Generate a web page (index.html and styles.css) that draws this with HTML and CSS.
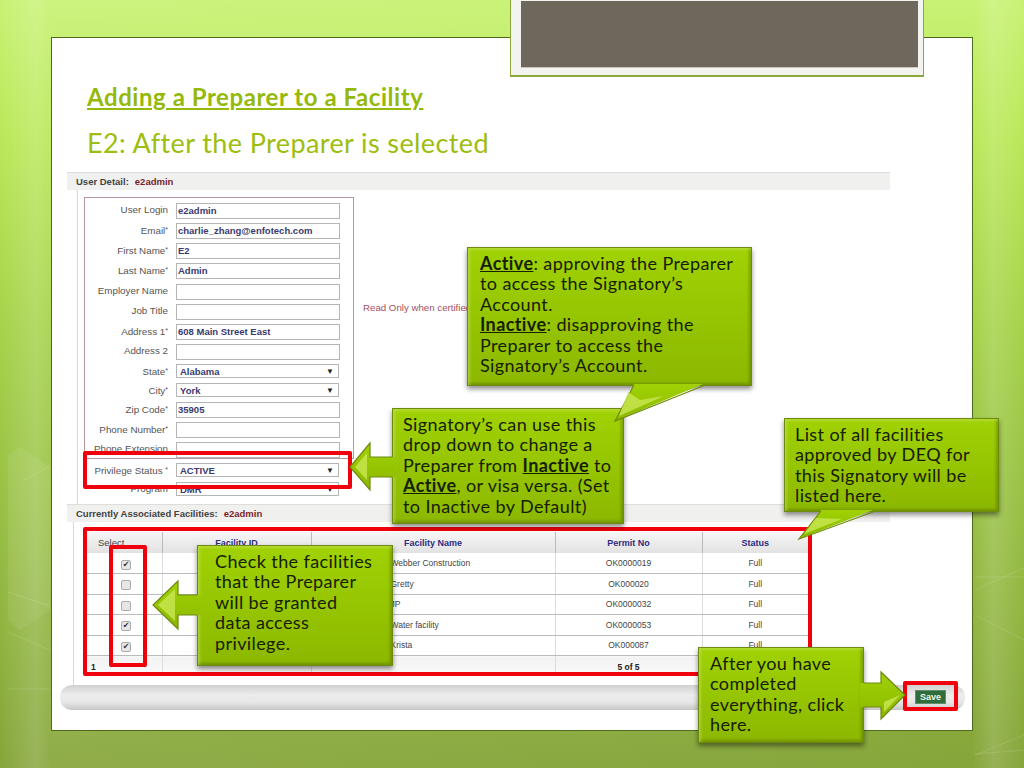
FILE: index.html
```html
<!DOCTYPE html>
<html lang="en">
<head>
    <meta charset="UTF-8">
    <title>Adding a Preparer to a Facility</title>
    <link rel="stylesheet" href="styles.css">
</head>
<body>
<div class="page">
    <!-- faint lines in the slide background -->
    <svg class="bg-lines" viewBox="0 0 1024 768">
        <polygon points="8,455 20,447 50,467 50,610 20,630 8,620" fill="#fff" opacity=".07"/>
        <g stroke="#fff" stroke-opacity=".13" fill="none">
            <line x1="8" y1="592" x2="50" y2="606"/>
            <line x1="8" y1="632" x2="50" y2="650"/>
            <line x1="8" y1="689" x2="50" y2="689"/>
            <line x1="24" y1="480" x2="50" y2="466"/>
            <line x1="975" y1="590" x2="1024" y2="568"/>
            <line x1="975" y1="577" x2="1024" y2="577"/>
            <line x1="975" y1="615" x2="1024" y2="640"/>
            <line x1="975" y1="755" x2="1024" y2="735"/>
            <line x1="975" y1="754" x2="1024" y2="750"/>
        </g>
    </svg>

    <div class="slide">
        <h1 class="title">Adding a Preparer to a Facility</h1>
        <h2 class="subtitle">E2: After the Preparer is selected</h2>

        <div class="section-head"><b>User Detail:</b><span>e2admin</span></div>
        <div class="user-body">
            <form class="user-form">
                <div class="row"><label>User Login</label><div class="field">e2admin</div></div>
                <div class="row"><label>Email<i>*</i></label><div class="field">charlie_zhang@enfotech.com</div></div>
                <div class="row"><label>First Name<i>*</i></label><div class="field">E2</div></div>
                <div class="row"><label>Last Name<i>*</i></label><div class="field">Admin</div></div>
                <div class="row"><label>Employer Name</label><div class="field"></div></div>
                <div class="row"><label>Job Title</label><div class="field"></div></div>
                <div class="row"><label>Address 1<i>*</i></label><div class="field">608 Main Street East</div></div>
                <div class="row"><label>Address 2</label><div class="field"></div></div>
                <div class="row short"><label>State<i>*</i></label><div class="field pick">Alabama<u>▼</u></div></div>
                <div class="row short"><label>City<i>*</i></label><div class="field pick">York<u>▼</u></div></div>
                <div class="row"><label>Zip Code<i>*</i></label><div class="field">35905</div></div>
                <div class="row"><label>Phone Number<i>*</i></label><div class="field"></div></div>
                <div class="row"><label>Phone Extension</label><div class="field"></div></div>
                <div class="row short"><label>Privilege Status <i>*</i></label><div class="field pick">ACTIVE<u>▼</u></div></div>
                <div class="row short"><label>Program</label><div class="field pick">DMR<u>▼</u></div></div>
            </form>
            <div class="read-only">Read Only when certified</div>
        </div>

        <div class="section-head"><b>Currently Associated Facilities:</b><span>e2admin</span></div>
        <div class="fac-body">
            <table class="fac-table">
                <thead>
                    <tr><th class="select">Select</th><th>Facility ID</th><th>Facility Name</th><th>Permit No</th><th>Status</th></tr>
                </thead>
                <tbody>
                    <tr><td><input type="checkbox" checked></td><td></td><td class="name">Webber Construction</td><td>OK0000019</td><td>Full</td></tr>
                    <tr><td><input type="checkbox"></td><td></td><td class="name">Gretty</td><td>OK000020</td><td>Full</td></tr>
                    <tr><td><input type="checkbox"></td><td></td><td class="name">JP</td><td>OK0000032</td><td>Full</td></tr>
                    <tr><td><input type="checkbox" checked></td><td></td><td class="name">Water facility</td><td>OK0000053</td><td>Full</td></tr>
                    <tr><td><input type="checkbox" checked></td><td></td><td class="name">Krista</td><td>OK000087</td><td>Full</td></tr>
                </tbody>
                <tfoot>
                    <tr><td class="pg">1</td><td></td><td></td><td>5 of 5</td><td></td></tr>
                </tfoot>
            </table>
        </div>

        <div class="save-bar"><button type="button" class="save">Save</button></div>
    </div>

    <div class="top-card"><div class="top-photo"></div></div>

    <!-- red highlights -->
    <div class="mark mark-status"></div>
    <div class="mark mark-table"></div>
    <div class="mark mark-select"></div>
    <div class="mark mark-save"></div>

    <!-- callouts -->
    <div class="callout c-active"><b>Active</b>: approving the Preparer<br>to access the Signatory’s<br>Account.<br><b>Inactive</b>: disapproving the<br>Preparer to access the<br>Signatory’s Account.</div>
    <div class="callout c-drop">Signatory’s can use this<br>drop down to change a<br>Preparer from <b>Inactive</b> to<br><b>Active</b>, or visa versa. (Set<br>to Inactive by Default)</div>
    <div class="callout c-list">List of all facilities<br>approved by DEQ for<br>this Signatory will be<br>listed here.</div>
    <div class="callout c-check">Check the facilities<br>that the Preparer<br>will be granted<br>data access<br>privilege.</div>
    <div class="callout c-after">After you have<br>completed<br>everything, click<br>here.</div>

    <svg class="shapes" viewBox="0 0 1024 768">
        <defs>
            <linearGradient id="fillV" x1="0" y1="0" x2="0" y2="1">
                <stop offset="0" stop-color="#a0d204"/>
                <stop offset="1" stop-color="#8cb800"/>
            </linearGradient>
        </defs>
        <!-- speech tails -->
        <polygon points="634,384 615,421 703,384" fill="url(#fillV)"/>
        <polyline points="634,385 615,421 703,386" class="edge"/>
        <polygon points="628,392 619,416 664,396 640,400" class="facet"/>
        <polygon points="821,510 799,539 873,510" fill="url(#fillV)"/>
        <polyline points="821,511 799,539 873,512" class="edge"/>
        <polygon points="816,518 804,534 842,519" class="facet"/>
        <!-- block arrows -->
        <polygon points="396,457 370,457 370,443 350,467 370,490 370,477 396,477" fill="url(#fillV)"/>
        <polyline points="392,457 370,457 370,443 350,467 370,490 370,477 392,477" class="edge"/>
        <polygon points="355,467 367,453 367,480" class="facet"/>
        <polygon points="201,595 178,595 178,581 153,605 178,629 178,615 201,615" fill="url(#fillV)"/>
        <polyline points="197,595 178,595 178,581 153,605 178,629 178,615 197,615" class="edge"/>
        <polygon points="158,605 175,589 175,621" class="facet"/>
        <polygon points="860,683 881,683 881,672 905,695 881,719 881,707 860,707" fill="url(#fillV)"/>
        <polyline points="864,683 881,683 881,672 905,695 881,719 881,707 864,707" class="edge"/>
        <polygon points="900,695 884,712 884,702" class="facet"/>
    </svg>
</div>
</body>
</html>
```

FILE: styles.css
```css
*{
    margin: 0;
    padding: 0;
    box-sizing: border-box;
}
body{
    font-family: "Liberation Sans", Arial, sans-serif;
    overflow: hidden;
}
.page{
    position: relative;
    width: 1024px;
    height: 768px;
    padding: 37px 51px;
    overflow: hidden;
    background:
        linear-gradient(90deg, rgba(255,255,255,0) 0, rgba(255,255,255,.16) 3.5%, rgba(255,255,255,.08) 5%, rgba(255,255,255,0) 95%, rgba(255,255,255,.14) 97%, rgba(255,255,255,0) 100%),
        linear-gradient(180deg, #c8f274 0, #b9e858 18%, #a5d34a 42%, #95bb42 72%, #86a53a 100%);
}
.bg-lines{
    position: absolute;
    left: 0;
    top: 0;
    width: 1024px;
    height: 768px;
}

/* slide */
.slide{
    position: relative;
    width: 922px;
    height: 694px;
    background-color: #fff;
    border: 1px solid #4e6a1c;
    padding-top: 46px;
}
.title{
    margin-left: 35px;
    font-family: Lato, sans-serif;
    font-size: 24px;
    line-height: 26px;
    font-weight: 700;
    letter-spacing: .55px;
    color: #95b90b;
    text-decoration: underline;
}
.subtitle{
    margin: 16px 0 12px 35px;
    font-family: Lato, sans-serif;
    font-size: 27px;
    line-height: 34px;
    font-weight: 400;
    letter-spacing: .4px;
    color: #9dbe10;
}

/* embedded app screenshot */
.section-head{
    margin-left: 15px;
    width: 823px;
    height: 18px;
    padding-left: 9px;
    background-color: #f0f0ee;
    border-top: 1px solid #ddd;
    font-size: 9.5px;
    line-height: 17px;
    color: #444;
}
.section-head span{
    margin-left: 6px;
    font-weight: bold;
    color: #7a1f2b;
}
.user-body{
    position: relative;
    margin-left: 25px;
    height: 314px;
    padding: 7px 0 0 6px;
    border-left: 1px solid #d8d8d8;
}
.user-form{
    width: 270px;
    height: 262px;
    padding-top: 5px;
    border: 1px solid #bb959c;
}
.row{
    display: flex;
    gap: 8px;
    height: 20.15px;
}
.row.short{
    height: 19px;
}
.row label{
    width: 83px;
    flex: none;
    text-align: right;
    font-size: 9.8px;
    line-height: 14px;
    white-space: nowrap;
    color: #555;
}
.row i{
    font-style: normal;
    font-size: 7px;
    vertical-align: 2px;
}
.field{
    width: 164px;
    height: 16px;
    padding-left: 1px;
    border: 1px solid #b5b5b5;
    background-color: #fff;
    font-size: 9.5px;
    line-height: 14px;
    font-weight: bold;
    color: #3a3a6e;
}
.field.pick{
    display: flex;
    justify-content: space-between;
    width: 163px;
    height: 14px;
    padding: 0 4px 0 3px;
    line-height: 13px;
}
.field.pick u{
    text-decoration: none;
    font-size: 8px;
    color: #222;
}
.read-only{
    position: absolute;
    left: 285px;
    top: 112px;
    font-size: 9.7px;
    color: #a4505f;
    white-space: nowrap;
}
.fac-body{
    margin-left: 21px;
    height: 163px;
    padding: 10px 0 0 13px;
    border-left: 1px solid #d8d8d8;
}
.fac-table{
    width: 721px;
    table-layout: fixed;
    border-collapse: collapse;
    font-size: 8.5px;
    color: #444;
    text-align: center;
}
.fac-table th:nth-child(1){ width: 75px; }
.fac-table th:nth-child(2){ width: 149px; }
.fac-table th:nth-child(3){ width: 244px; }
.fac-table th:nth-child(4){ width: 147px; }
.fac-table th{
    height: 21px;
    background: linear-gradient(180deg, #f6f6f6, #e2e2e2);
    border-right: 1px solid #bbb;
    font-size: 9px;
    color: #2c2c84;
}
.fac-table th:last-child{
    border-right: 0;
}
.fac-table th.select{
    padding-left: 11px;
    text-align: left;
    font-size: 9.5px;
    font-weight: normal;
    color: #444;
}
.fac-table td{
    height: 20.5px;
    border-bottom: 1px solid #bbb;
    border-right: 1px solid #ddd;
}
.fac-table td:last-child{
    border-right: 0;
}
.fac-table td.name{
    text-align: left;
    padding-left: 79px;
}
.fac-table input{
    display: block;
    appearance: none;
    width: 10px;
    height: 10px;
    margin: 3px auto 0 34px;
    border: 1px solid #aaa;
    border-radius: 2px;
    background-color: #e6e6e6;
    font: 8px/8px "DejaVu Sans", sans-serif;
    color: #333;
    text-align: center;
}
.fac-table input:checked::after{
    content: "✔";
}
.fac-table tfoot td{
    height: 20px;
    padding-top: 3px;
    background: linear-gradient(180deg, #f2f2f2, #fafafa);
    border-bottom: 0;
    font-weight: bold;
    color: #222;
}
.fac-table td.pg{
    text-align: left;
    padding-left: 4px;
}
.save-bar{
    display: flex;
    justify-content: flex-end;
    align-items: center;
    width: 905px;
    height: 25px;
    margin-left: 8px;
    padding: 0 19px 2px 0;
    border-radius: 12px;
    background: linear-gradient(180deg, #d0d0d0 0, #ededed 40%, #e6e6e6 70%, #c6c6c6 100%);
}
.save{
    width: 31px;
    height: 14px;
    border: 1px solid #5e8f68;
    background-color: #2f6d3c;
    color: #eef5ee;
    font-family: inherit;
    font-size: 9px;
    font-weight: bold;
}

/* picture frame hanging from the top edge */
.top-card{
    position: absolute;
    left: 510px;
    top: -4px;
    width: 414px;
    height: 81px;
    padding: 4px 5px 0 10px;
    background-color: #f3f4ef;
    border: 1px solid #8ca63a;
    border-bottom-width: 2px;
}
.top-photo{
    height: 67px;
    background-color: #6e675b;
    border-bottom: 1px solid #c9c6bf;
}

/* red highlight rectangles */
.mark{
    position: absolute;
    border: 4px solid #f0000c;
    border-radius: 2px;
}
.mark-status{ left: 83px; top: 451px; width: 269px; height: 38px; }
.mark-table{ left: 83px; top: 527px; width: 729px; height: 149px; }
.mark-select{ left: 109px; top: 545px; width: 38px; height: 122px; }
.mark-save{ left: 903px; top: 681px; width: 55px; height: 30px; }

/* green callouts */
.callout{
    position: absolute;
    padding: 5px 0 0 12px;
    font-family: Lato, sans-serif;
    font-size: 18px;
    line-height: 20.4px;
    letter-spacing: .4px;
    white-space: nowrap;
    color: #152000;
    border: 1px solid #6f8a10;
    background: linear-gradient(180deg, #a0d204, #8cb800);
    box-shadow:
        inset 4px 4px 3px -2px rgba(205,230,110,.45),
        inset -4px -4px 3px -2px rgba(70,95,0,.4),
        0 3px 5px rgba(0,0,0,.45);
}
.callout b{
    text-decoration: underline;
}
.c-active{ left: 467px; top: 247px; width: 285px; height: 139px; }
.c-drop{ left: 392px; top: 408px; width: 232px; height: 116px; padding-left: 10px; }
.c-list{ left: 784px; top: 418px; width: 215px; height: 94px; padding-left: 10px; }
.c-check{ left: 197px; top: 545px; width: 196px; height: 121px; padding-left: 17px; }
.c-after{ left: 698px; top: 647px; width: 166px; height: 96px; padding-left: 11px; }

.shapes{
    position: absolute;
    left: 0;
    top: 0;
    width: 1024px;
    height: 768px;
}
.edge{
    fill: none;
    stroke: #6f8a10;
    stroke-width: 1.2;
}
.facet{
    fill: #cdea5a;
    opacity: .75;
}
```
